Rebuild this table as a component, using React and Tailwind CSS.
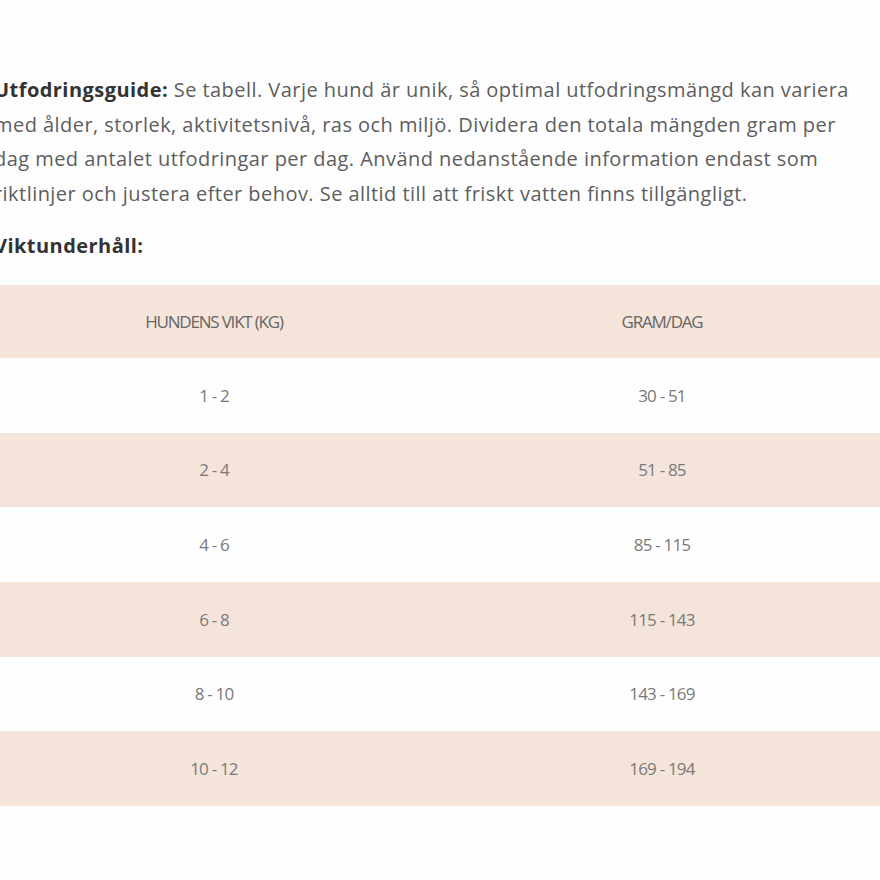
export default function App() {
  const rows = [
    ['1 - 2', '30 - 51'],
    ['2 - 4', '51 - 85'],
    ['4 - 6', '85 - 115'],
    ['6 - 8', '115 - 143'],
    ['8 - 10', '143 - 169'],
    ['10 - 12', '169 - 194'],
  ]

  return (
    <div className="w-[880px] h-[880px] overflow-hidden bg-[#fdfdfd] font-['Open_Sans',sans-serif]">
      <div className="ml-[-10px] w-[896px] pt-[73px]">
        <p className="text-[20px] leading-[34.5px] tracking-[0.45px] text-[#5e5e5e] pl-[4px] whitespace-nowrap">
          <span className="font-bold text-[#333]">Utfodringsguide:</span> Se tabell. Varje hund är unik, så optimal utfodringsmängd kan variera
          <br />
          med ålder, storlek, aktivitetsnivå, ras och miljö. Dividera den totala mängden gram per
          <br />
          dag med antalet utfodringar per dag. Använd nedanstående information endast som
          <br />
          riktlinjer och justera efter behov. Se alltid till att friskt vatten finns tillgängligt.
        </p>
        <p className="mt-[18px] pl-[4px] text-[20px] leading-[34px] tracking-[0.45px] font-bold text-[#333]">Viktunderhåll:</p>

        <div className="mt-[22px]">
          <div className="grid grid-cols-2 h-[73px] items-center bg-[#f4e4da] text-[17px] text-[#666] uppercase tracking-[-1.2px]">
            <div className="text-center">Hundens vikt (kg)</div>
            <div className="text-center">Gram/dag</div>
          </div>
          {rows.map((r, i) => (
            <div
              key={r[0]}
              className={
                'grid grid-cols-2 h-[74.7px] items-center text-[17px] tracking-[-0.8px] text-[#7a7a7a] ' +
                (i % 2 === 0 ? 'bg-[#fefefe]' : 'bg-[#f4e4da]')
              }
            >
              <div className="text-center">{r[0]}</div>
              <div className="text-center">{r[1]}</div>
            </div>
          ))}
        </div>
      </div>
    </div>
  )
}
